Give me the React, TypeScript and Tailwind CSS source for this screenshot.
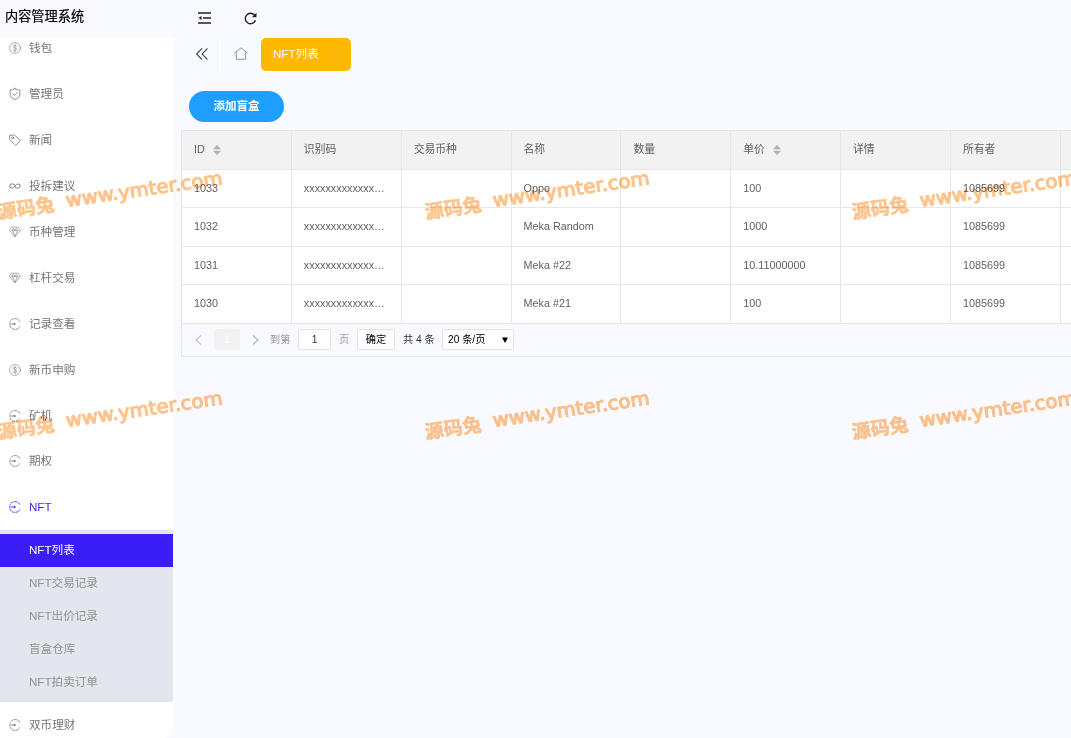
import React from 'react';

type TIcon = 'dollar' | 'shield' | 'tag' | 'link' | 'diamond' | 'enter';

interface IMenuItem {
	text: string;
	icon: TIcon;
	active?: boolean;
}

const MENU: IMenuItem[] = [
	{ text: '钱包', icon: 'dollar' },
	{ text: '管理员', icon: 'shield' },
	{ text: '新闻', icon: 'tag' },
	{ text: '投拆建议', icon: 'link' },
	{ text: '币种管理', icon: 'diamond' },
	{ text: '杠杆交易', icon: 'diamond' },
	{ text: '记录查看', icon: 'enter' },
	{ text: '新币申购', icon: 'dollar' },
	{ text: '矿机', icon: 'enter' },
	{ text: '期权', icon: 'enter' },
	{ text: 'NFT', icon: 'enter', active: true },
];

const SUBMENU = ['NFT交易记录', 'NFT出价记录', '盲盒仓库', 'NFT拍卖订单'];

const COLUMNS = ['ID', '识别码', '交易币种', '名称', '数量', '单价', '详情', '所有者', ''];
const SORTABLE = ['ID', '单价'];

const ROWS = [
	['1033', 'xxxxxxxxxxxxx…', '', 'Oppo', '', '100', '', '1085699', ''],
	['1032', 'xxxxxxxxxxxxx…', '', 'Meka Random', '', '1000', '', '1085699', ''],
	['1031', 'xxxxxxxxxxxxx…', '', 'Meka #22', '', '10.11000000', '', '1085699', ''],
	['1030', 'xxxxxxxxxxxxx…', '', 'Meka #21', '', '100', '', '1085699', ''],
];

const MenuIcon: React.FC<{ icon: TIcon }> = ({ icon }) => (
	<svg
		className="w-3 h-3 shrink-0 overflow-visible"
		viewBox="0 0 12 12"
		fill="none"
		stroke="currentColor"
		strokeWidth="0.8"
		strokeLinecap="round"
		strokeLinejoin="round"
	>
		{icon === 'dollar' && (
			<g strokeWidth="0.6">
				<circle cx="6" cy="6" r="5.4" />
				<path d="M7.7 4.4C7.5 3.600 6.900 3.300 6 3.300c-.9 0-1.700.4-1.700 1.300C4.300 6.400 7.800 5.500 7.800 7.400c0 .9-.8 1.300-1.800 1.300-.9 0-1.700-.4-1.800-1.300M6 2.300v7.400" />
			</g>
		)}
		{icon === 'shield' && (
			<>
				<path d="M6 .6c1.500.9 3 1.300 4.900 1.400v4.200c0 2.500-2 4.300-4.900 5.300C3.100 10.500 1.100 8.700 1.100 6.200V2C3 1.900 4.500 1.500 6 .6z" />
				<path d="M3.700 5.800l1.700 1.700 3.100-3.100" />
			</>
		)}
		{icon === 'tag' && (
			<>
				<path d="M.8 1.400l4.600-.5 6 5.700-4.700 4.800L1 5.800z" />
				<circle cx="3.700" cy="3.800" r="1" />
			</>
		)}
		{icon === 'link' && (
			<path
				strokeWidth="1"
				d="M6.500 5.600L5 4.300C3.200 3.200.8 4.200.8 6s2.200 2.700 3.700 1.600l3-3C9 3.300 11.200 4.300 11.200 6S9 8.800 7.200 7.800L6.200 7"
			/>
		)}
		{icon === 'diamond' && (
			<path
				d="M2.800 1.200h6.400l2.200 3.200L6 11 .6 4.400zM2.600 4.400h6.800M3.500 4.400L6 10.300l2.500-5.900L7.300 2.600 6 4.200 4.700 2.600z"
				strokeWidth="0.6"
			/>
		)}
		{icon === 'enter' && (
			<>
				<path
					d="M10.800 3.300C9.900 1.600 8.100.6 6 .6 3.500.6 1.500 2 .9 4.200M.9 7.800C1.500 10 3.500 11.400 6 11.400c2.100 0 3.900-1 4.800-2.700"
					strokeDasharray="2.600 1.300"
				/>
				<path d="M.3 6H5.500" />
				<path d="M5.200 5L7 6 5.200 7z" fill="currentColor" strokeWidth="0.300" />
			</>
		)}
	</svg>
);

const MenuItem: React.FC<IMenuItem> = ({ text, icon, active }) => (
	<li
		className={`flex items-center h-[45.9px] pl-[9px] gap-2 ${
			active ? 'text-[#3b1df5]' : 'text-[#757575]'
		}`}
	>
		<MenuIcon icon={icon} />
		<span>{text}</span>
	</li>
);

const Sidebar: React.FC = () => (
	<aside className="w-[173px] shrink-0">
		<h1 className="h-[37px] pt-[7px] pl-[5px] text-[13.2px] leading-5 text-black [-webkit-text-stroke:0.200px_#000]">
			内容管理系统
		</h1>
		<div className="h-[703px] bg-white rounded-br-[16px] overflow-hidden text-[11.6px] leading-4">
			<ul className="-mt-[11.500px]">
				{MENU.map((item) => (
					<MenuItem key={item.text} {...item} />
				))}
			</ul>
			<ul className="h-[172px] pt-1 -mt-[0.400px] bg-[#e3e6ed] rounded-r-xs text-[#929292]">
				<li className="h-[33px] pl-[29px] flex items-center bg-[#3b1df5] text-white">
					NFT列表
				</li>
				{SUBMENU.map((text) => (
					<li key={text} className="h-[32.8px] pl-[29px] flex items-center">
						{text}
					</li>
				))}
			</ul>
			<ul>
				<MenuItem text="双币理财" icon="enter" />
			</ul>
		</div>
	</aside>
);

const Toolbar: React.FC = () => (
	<div className="flex items-center h-[37px] pl-[18.500px] pb-px gap-[33px] text-[#222]">
		<svg className="w-[13px] h-3" viewBox="0 0 13 12" fill="none" stroke="currentColor" strokeWidth="1.300">
			<path d="M0 1h13M5 6h8M0 11h13" />
			<path d="M0.500 6L3.500 3.900v4.200z" fill="currentColor" stroke="none" />
		</svg>
		<svg className="w-[13px] h-[13px]" viewBox="0 0 13 13" fill="none" stroke="currentColor" strokeWidth="1.400">
			<path d="M10.600 3.300A5.200 5.200 0 1 0 11.400 8.300" />
			<path d="M12.500.8v4.500H8z" fill="currentColor" stroke="none" />
		</svg>
	</div>
);

const Tabs: React.FC = () => (
	<div className="flex items-center h-[33px] mt-px">
		<div className="w-[39px] h-full pl-[17px] pb-px flex items-center border-r border-[#f3f3f6]">
			<svg className="w-3 h-3" viewBox="0 0 12 12" fill="none" stroke="#444" strokeWidth="1.100">
				<path d="M6 .4L.6 6 6 11.600M11.500.4L6.100 6l5.400 5.600" />
			</svg>
		</div>
		<div className="w-[43px] pl-4 pb-[2px] flex items-center">
			<svg className="w-[14px] h-[13px]" viewBox="0 0 14 13" fill="none" stroke="#888" strokeWidth="0.9">
				<path d="M.5 6L7 .8 13.500 6M2.300 4.900v7.300h9.400V4.900" />
			</svg>
		</div>
		<div className="w-[90px] h-[33px] pl-3 pr-[10px] pb-px flex items-center justify-between rounded-[5px] bg-[#ffb800] text-white text-[11.600px]">
			<span>NFT列表</span>
			<svg className="w-[7px] h-[7px] shrink-0" viewBox="0 0 7 7" fill="none" stroke="#d0bb8c" strokeWidth="1">
				<path d="M.5.5l6 6M6.500.5l-6 6" />
			</svg>
		</div>
	</div>
);

const SortMark: React.FC = () => (
	<svg className="w-2 h-[10px] ml-2" viewBox="0 0 8 10" fill="#b0b0b0">
		<path d="M4 0l4 4.200H0zM4 10L0 5.800h8z" />
	</svg>
);

const cell =
	'flex items-center pl-3 pb-px border-r border-b border-[#e6e6e6] whitespace-nowrap';

const Table: React.FC = () => (
	<div className="w-[990px] border-l border-t border-[#e6e6e6] text-[10.800px] text-[#606060]">
		<div className="grid grid-cols-[repeat(9,109.85px)] h-[39px] bg-[#f2f2f2]">
			{COLUMNS.map((name, i) => (
				<div key={i} className={cell}>
					{name}
					{SORTABLE.includes(name) && <SortMark />}
				</div>
			))}
		</div>
		{ROWS.map((row) => (
			<div
				key={row[0]}
				className="grid grid-cols-[repeat(9,109.85px)] h-[38.400px] bg-white"
			>
				{row.map((value, i) => (
					<div key={i} className={cell}>
						{value}
					</div>
				))}
			</div>
		))}
		<Pager />
	</div>
);

const Pager: React.FC = () => (
	<div className="flex items-center h-[33px] pl-3 border-b border-[#e6e6e6] text-[10.200px] text-black">
		<svg className="w-[9px] h-[10px]" viewBox="0 0 9 10" fill="none" stroke="#c2c2c2" strokeWidth="1.100">
			<path d="M7 .5L2 5l5 4.500" />
		</svg>
		<span className="w-[26px] h-[21px] ml-[11px] flex items-center justify-center rounded-xs bg-[#f2f2f2] text-white">
			1
		</span>
		<svg className="w-[9px] h-[10px] ml-[11px]" viewBox="0 0 9 10" fill="none" stroke="#b0b0b0" strokeWidth="1.100">
			<path d="M2 .5L7 5 2 9.500" />
		</svg>
		<span className="w-5 ml-[10px] text-[#999] whitespace-nowrap">到第</span>
		<span className="w-[33px] h-[21px] ml-2 flex items-center justify-center border border-[#e2e2e2] rounded-xs bg-white text-[#333]">
			1
		</span>
		<span className="w-[10px] ml-2 text-[#999] whitespace-nowrap">页</span>
		<span className="w-[38px] h-[21px] ml-2 pt-px flex items-center justify-center border border-[#e2e2e2] rounded-xs bg-white">
			确定
		</span>
		<span className="w-[31px] ml-2 text-[#333] whitespace-nowrap">共 4 条</span>
		<span className="w-[72px] h-[21px] ml-2 pt-px pl-[5px] pr-[5px] flex items-center justify-between border border-[#e2e2e2] rounded-xs bg-white">
			20 条/页
			<svg className="w-[6px] h-[6px]" viewBox="0 0 6 6">
				<path d="M0 .5h6L3 6z" />
			</svg>
		</span>
	</div>
);

// left edge and top of every stamp before it is tilted
const STAMPS = [
	'left-[-2px] top-[201px]',
	'left-[425px] top-[201px]',
	'left-[852px] top-[201px]',
	'left-[-2px] top-[421px]',
	'left-[425px] top-[421px]',
	'left-[852px] top-[421px]',
];

const Watermark: React.FC = () => (
	<div className="absolute inset-0 overflow-hidden pointer-events-none mix-blend-multiply">
		{STAMPS.map((place) => (
			<div
				key={place}
				className={`absolute ${place} h-6 flex items-center origin-left -rotate-[8.300deg] text-[#ffc48c] font-bold whitespace-nowrap`}
			>
				<span className="w-[69px] pt-px text-[19px] [-webkit-text-stroke:0.500px_#ffc48c]">源码兔</span>
				<svg className="w-[160px] h-6 overflow-visible" viewBox="0 0 160 24">
					<text
						x="0"
						y="16"
						textLength="158"
						lengthAdjust="spacingAndGlyphs"
						fill="#ffc48c"
						stroke="#ffc48c"
						strokeWidth="1.200"
						strokeLinejoin="round"
						className="text-[19px] font-normal font-['DejaVu_Sans']"
					>
						www.ymter.com
					</text>
				</svg>
			</div>
		))}
	</div>
);

const App: React.FC = () => {
	return (
		<div className="relative w-[1071px] h-[738px] flex overflow-hidden bg-[#f9faff] font-['Liberation_Sans','Noto_Sans_CJK_SC',sans-serif]">
			<Sidebar />
			<main className="flex-1 min-w-0 pl-[6px]">
				<Toolbar />
				<Tabs />
				<div className="pl-[2px] pt-5">
					<button className="ml-2 w-[95px] h-[31px] mb-2 pt-px flex items-center justify-center rounded-full bg-[#1e9fff] text-white text-[11.500px] font-bold">
						添加盲盒
					</button>
					<Table />
				</div>
			</main>
			<Watermark />
		</div>
	);
};

export default App;
